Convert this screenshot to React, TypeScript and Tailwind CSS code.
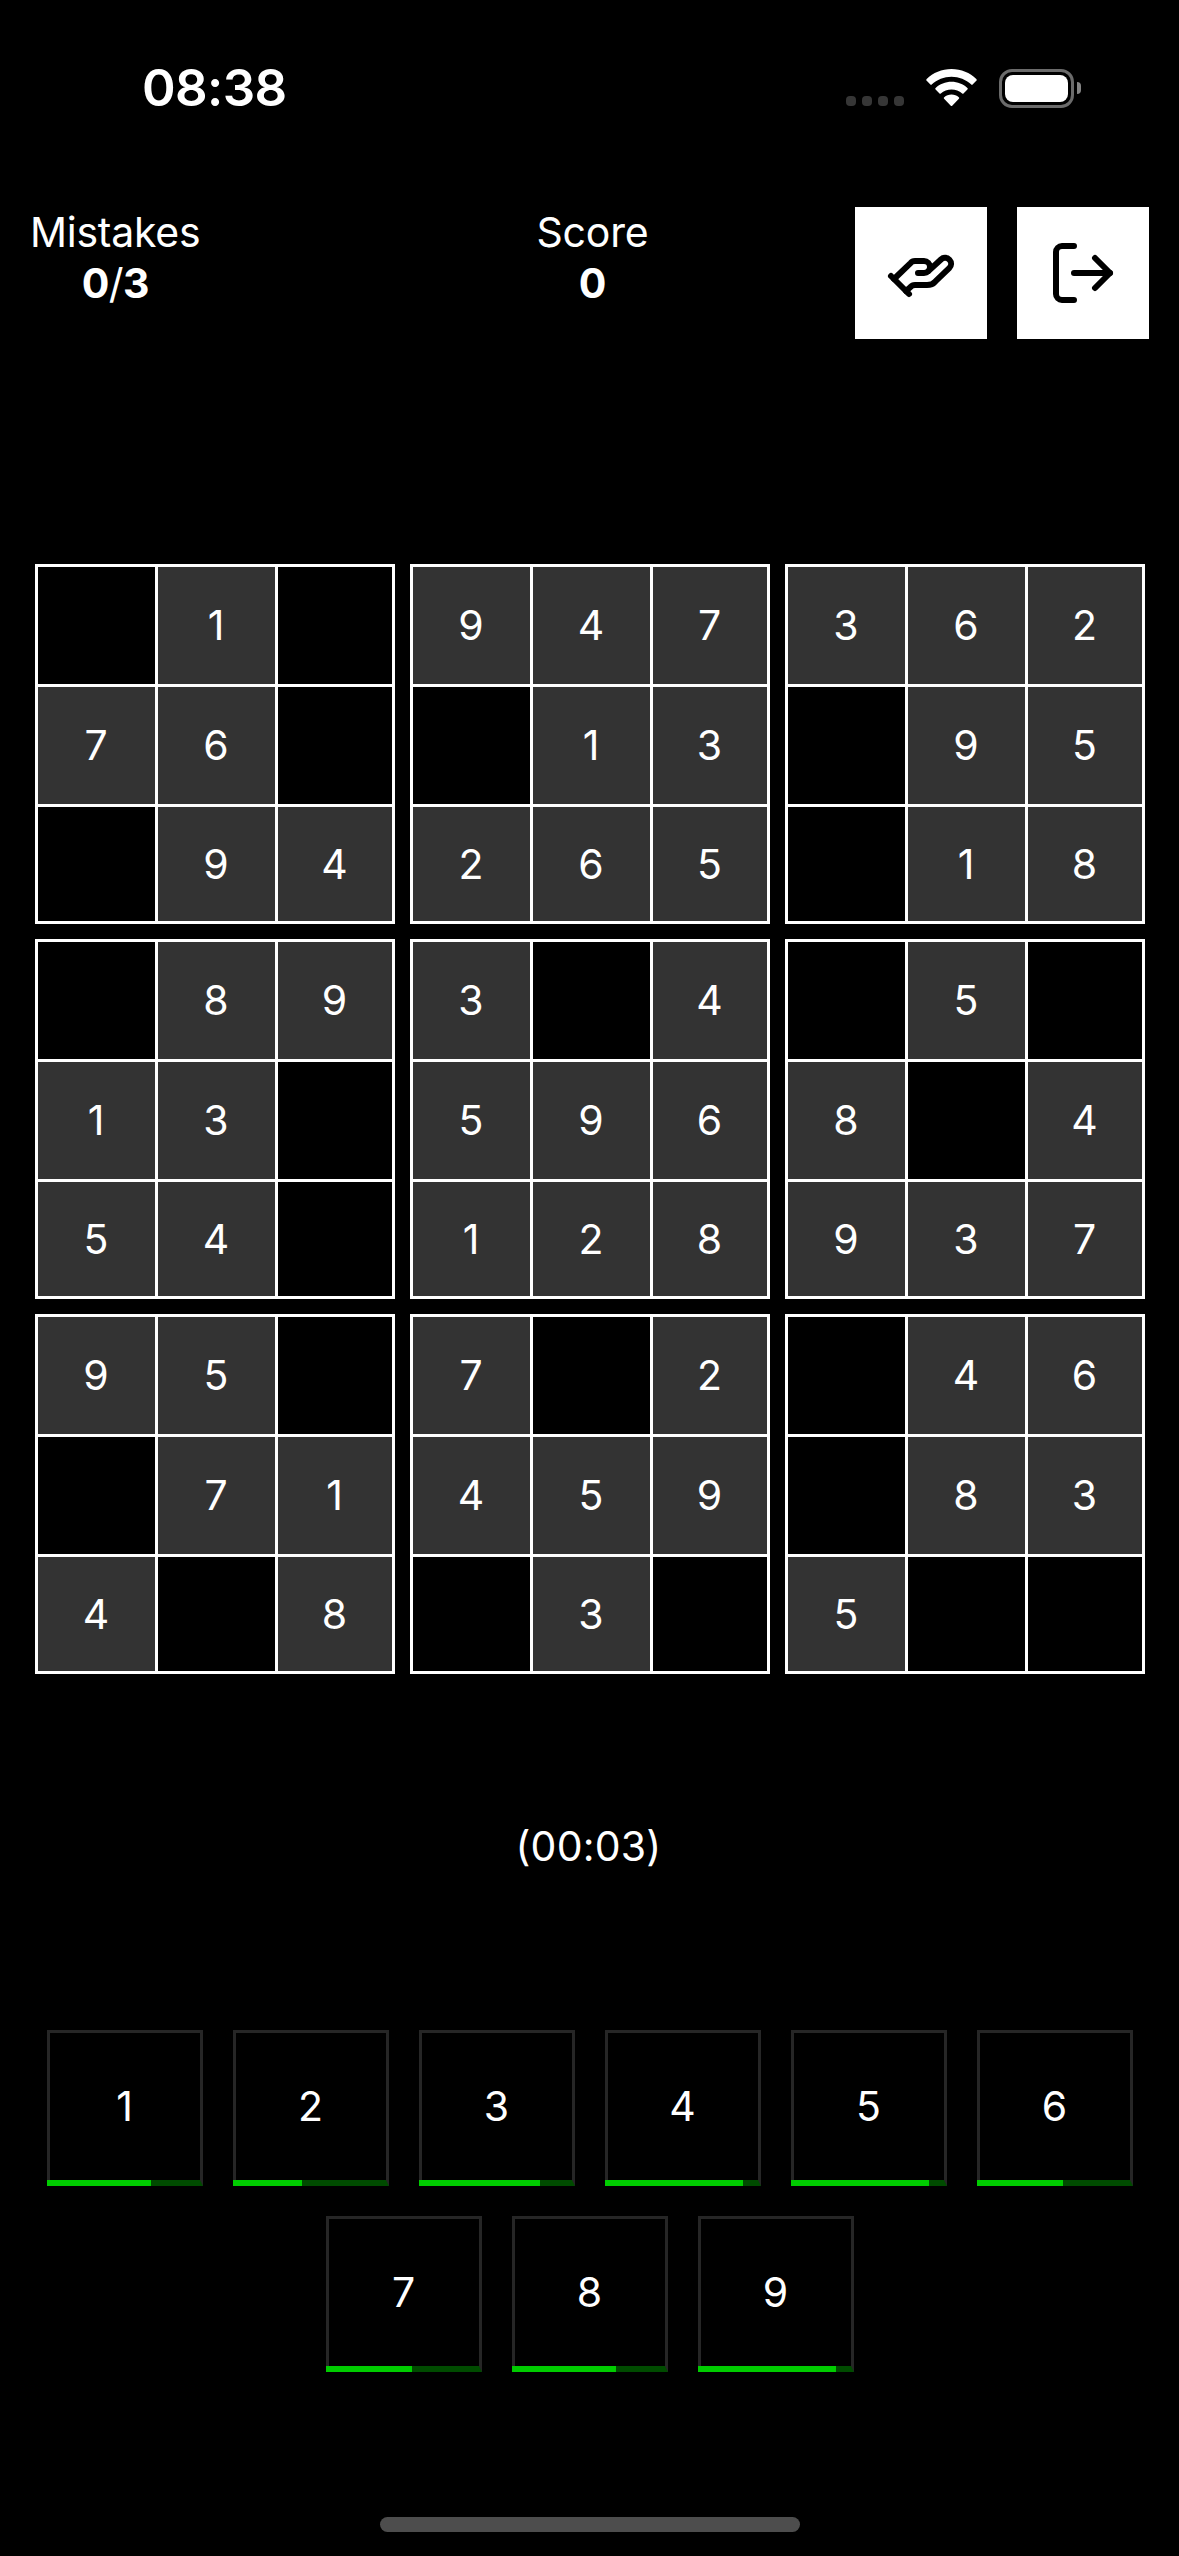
import { HandHelping, LogOut } from 'lucide-react';

// Each string is one 3×3 box, read row by row; a dot is an empty cell.
const boxes = [
  '.1.76..94', '947.13265', '362.95.18',
  '.8913.54.', '3.4596128', '.5.8.4937',
  '95..714.8', '7.2459.3.', '.46.835..',
];

// How many of each digit are already placed, out of nine.
const placed = [6, 4, 7, 8, 8, 5, 5, 6, 8];

function StatusBar() {
  return (
    <div className="flex h-[177px] items-start justify-between pt-[57px] pr-[98px] pl-[142px]">
      <div className="text-[51px] leading-[62px] font-semibold tracking-[-0.6px]">08:38</div>
      <div className="flex h-[62px] items-center">
        <div className="mt-[26px] flex gap-[6px]">
          {[0, 1, 2, 3].map((i) => (
            <div key={i} className="size-[10px] rounded-[4px] bg-[#363636]" />
          ))}
        </div>
        <svg className="ml-[22px]" width="51" height="38" viewBox="0 0 51 38" fill="white">
          <path d="M25.5 0C35.2 0 44 3.8 50.3 10q.9.9 0 1.8L46.600 15.600q-.6.6-1.300 0C40 10.600 33 7.700 25.500 7.700S11 10.600 5.700 15.600q-.7.6-1.300 0L.7 11.800q-.9-.9 0-1.800C7 3.800 15.800 0 25.500 0Z" />
          <path d="M25.500 12.800c6.100 0 11.700 2.300 15.900 6.100q.9.900 0 1.700l-3.900 3.900q-.6.600-1.300.1c-2.900-2.500-6.600-4-10.700-4s-7.800 1.500-10.700 4q-.7.500-1.300-.1l-3.900-3.900q-.9-.8 0-1.700c4.200-3.800 9.800-6.100 15.900-6.100Z" />
          <path d="M25.500 25.600c2.800 0 5.300.9 7.300 2.600q.9.800.1 1.600l-6.700 6.900q-.7.700-1.400 0l-6.700-6.900q-.8-.8.1-1.600c2-1.700 4.500-2.600 7.300-2.600Z" />
        </svg>
        <div className="ml-[22px] flex h-[39px] w-[75px] rounded-[13px] border-[3px] border-[#6b6b6b] p-[3px]">
          <div className="flex-1 rounded-[8px] bg-white" />
        </div>
        <div className="ml-[3px] h-[12px] w-[4px] rounded-r-full bg-[#858585]" />
      </div>
    </div>
  );
}

function Header() {
  return (
    <div className="flex h-[162px] items-start justify-between px-[30px] pt-[30px]">
      <div className="flex w-[294px] justify-start">
        <div className="text-center leading-[51px]">
          <div className="tracking-[-0.25px]">Mistakes</div>
          <div className="tracking-[-0.6px]">
            <b className="font-bold">0</b>/<b className="font-bold">3</b>
          </div>
        </div>
      </div>
      <div className="ml-[6px] text-center leading-[51px]">
        <div className="tracking-[-0.2px]">Score</div>
        <div className="font-bold">0</div>
      </div>
      <div className="flex gap-[30px] text-black">
        <button className="flex size-[132px] items-center justify-center bg-white">
          <HandHelping size={72} strokeWidth={2} />
        </button>
        <button className="flex size-[132px] items-center justify-center bg-white">
          <LogOut size={72} strokeWidth={2} />
        </button>
      </div>
    </div>
  );
}

function Box({ cells }: { cells: string }) {
  return (
    <div className="grid size-[360px] grid-cols-[117px_117px_114px] grid-rows-[117px_117px_114px] gap-[3px] bg-white p-[3px]">
      {cells.split('').map((c, i) => (
        <div
          key={i}
          className={`flex items-center justify-center pr-px pb-px ${c === '.' ? 'bg-black' : 'bg-[#333333]'}`}
        >
          {c === '.' ? '' : c}
        </div>
      ))}
    </div>
  );
}

function NumberKey({ digit, count }: { digit: number; count: number }) {
  return (
    <div className="relative flex size-[156px] items-center justify-center border-[3px] border-b-[6px] border-[#262626] border-b-[#004b00] pr-px pb-px">
      {digit}
      <div
        className="absolute -bottom-[6px] -left-[3px] h-[6px] bg-[#00cc00]"
        style={{ width: Math.floor((count / 9) * 156) }}
      />
    </div>
  );
}

export default function App() {
  return (
    <div className="flex h-[2556px] w-[1179px] flex-col overflow-hidden bg-black font-['Inter',sans-serif] text-[41px] leading-[50px] text-white">
      <StatusBar />
      <Header />
      <div className="mt-[225px] ml-[35px] grid w-[1110px] grid-cols-3 gap-[15px]">
        {boxes.map((cells, i) => (
          <Box key={i} cells={cells} />
        ))}
      </div>
      <div className="mt-[147px] pr-[2px] text-center tracking-[0.2px]">(00:03)</div>
      <div className="mt-[159px] ml-px flex flex-wrap justify-center gap-[30px] px-[45px]">
        {placed.map((count, i) => (
          <NumberKey key={i} digit={i + 1} count={count} />
        ))}
      </div>
      <div className="mt-auto mb-[24px] ml-[380px] h-[15px] w-[420px] rounded-full bg-[#4d4d4d]" />
    </div>
  );
}
